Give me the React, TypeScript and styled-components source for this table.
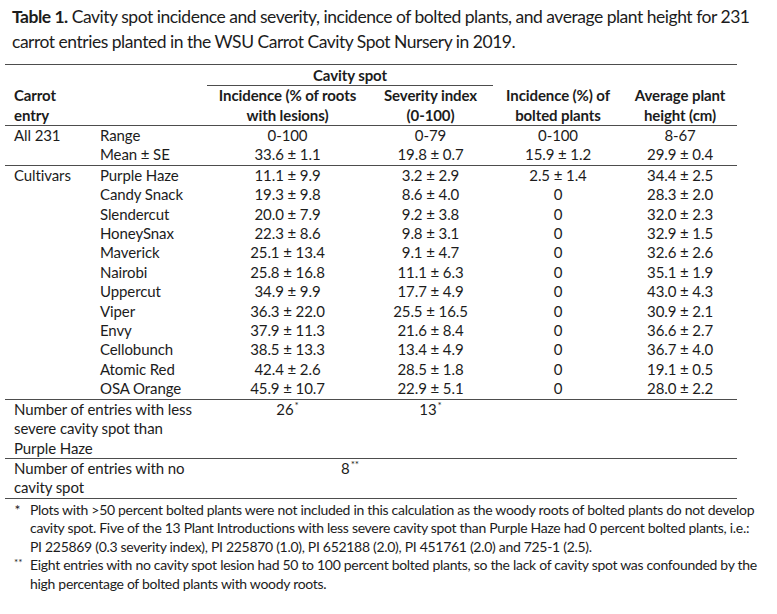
import React from 'react';
import styled, { createGlobalStyle } from 'styled-components';

const GlobalStyle = createGlobalStyle`
  html, body {
    margin: 0;
    padding: 0;
    background: #ffffff;
  }
  body {
    font-family: Lato, "Open Sans", "Liberation Sans", sans-serif;
    color: #1c1c1c;
  }
`;

const Page = styled.div`
  width: 777px;
  height: 614px;
  padding: 4px 0 0 5px;
  box-sizing: border-box;
  overflow: hidden;
`;

const Caption = styled.p`
  margin: 0 0 10px 7px;
  font-size: 17.5px;
  letter-spacing: -0.48px;
  line-height: 25px;
  white-space: nowrap;
`;

const Line = styled.span`
  display: block;
`;

const Table = styled.table`
  width: 732px;
  border-collapse: collapse;
  table-layout: fixed;
  font-size: 15px;
  line-height: 19.4px;
  letter-spacing: -0.1px;
  border-top: 1px solid #4d4d4d;
`;

type RowProps = {
  $rule?: boolean;
};

const Row = styled.tr<RowProps>`
  border-bottom: ${(props) => (props.$rule ? '1px solid #4d4d4d' : 'none')};
`;

type CellProps = {
  $align?: 'left' | 'center';
};

const Th = styled.th<CellProps>`
  font-weight: 700;
  padding: 0 9px;
  vertical-align: bottom;
  text-align: ${(props) => props.$align || 'center'};
  line-height: 19.5px;
`;

const GroupTh = styled.th`
  font-weight: 700;
  padding: 0;
  height: 20px;
  line-height: 20px;
  text-align: center;
  border-bottom: 1px solid #4d4d4d;
`;

const Td = styled.td<CellProps>`
  padding: 0 9px;
  vertical-align: top;
  white-space: nowrap;
  text-align: ${(props) => props.$align || 'center'};
`;

const WrapTd = styled.td`
  padding: 0 9px;
  vertical-align: top;
  text-align: left;
`;

const Mark = styled.sup`
  font-size: 10px;
  line-height: 0;
  vertical-align: 6px;
  margin-left: 1px;
`;

const Notes = styled.div`
  margin-top: 2px;
  font-size: 14px;
  line-height: 18.5px;
`;

const Note = styled.div`
  display: grid;
  grid-template-columns: 25px 1fr;
  white-space: nowrap;
`;

const NoteText = styled.div`
  letter-spacing: -0.3px;
`;

type StarProps = {
  $double?: boolean;
};

const Star = styled.span<StarProps>`
  text-align: ${(props) => (props.$double ? 'left' : 'center')};
  padding-left: ${(props) => (props.$double ? '9px' : '0')};
  font-size: ${(props) => (props.$double ? '10px' : '14px')};
  line-height: ${(props) => (props.$double ? '12px' : '18.5px')};
`;

type Cultivar = [string, string, string, string, string];

const cultivars: Cultivar[] = [
  ['Purple Haze', '11.1 ± 9.9', '3.2 ± 2.9', '2.5 ± 1.4', '34.4 ± 2.5'],
  ['Candy Snack', '19.3 ± 9.8', '8.6 ± 4.0', '0', '28.3 ± 2.0'],
  ['Slendercut', '20.0 ± 7.9', '9.2 ± 3.8', '0', '32.0 ± 2.3'],
  ['HoneySnax', '22.3 ± 8.6', '9.8 ± 3.1', '0', '32.9 ± 1.5'],
  ['Maverick', '25.1 ± 13.4', '9.1 ± 4.7', '0', '32.6 ± 2.6'],
  ['Nairobi', '25.8 ± 16.8', '11.1 ± 6.3', '0', '35.1 ± 1.9'],
  ['Uppercut', '34.9 ± 9.9', '17.7 ± 4.9', '0', '43.0 ± 4.3'],
  ['Viper', '36.3 ± 22.0', '25.5 ± 16.5', '0', '30.9 ± 2.1'],
  ['Envy', '37.9 ± 11.3', '21.6 ± 8.4', '0', '36.6 ± 2.7'],
  ['Cellobunch', '38.5 ± 13.3', '13.4 ± 4.9', '0', '36.7 ± 4.0'],
  ['Atomic Red', '42.4 ± 2.6', '28.5 ± 1.8', '0', '19.1 ± 0.5'],
  ['OSA Orange', '45.9 ± 10.7', '22.9 ± 5.1', '0', '28.0 ± 2.2'],
];

function App() {
  return (
    <>
      <GlobalStyle />
      <Page>
        <Caption>
          <Line>
            <b>Table 1.</b> Cavity spot incidence and severity, incidence of bolted plants, and average plant height for 231
          </Line>
          <Line>carrot entries planted in the WSU Carrot Cavity Spot Nursery in 2019.</Line>
        </Caption>

        <Table>
          <colgroup>
            <col style={{ width: 86 }} />
            <col style={{ width: 116 }} />
            <col style={{ width: 161 }} />
            <col style={{ width: 125 }} />
            <col style={{ width: 130 }} />
            <col style={{ width: 114 }} />
          </colgroup>
          <thead>
            <tr>
              <th aria-hidden />
              <th aria-hidden />
              <GroupTh colSpan={2}>Cavity spot</GroupTh>
              <th aria-hidden />
              <th aria-hidden />
            </tr>
            <Row $rule>
              <Th $align="left">Carrot<br />entry</Th>
              <Th />
              <Th>Incidence (% of roots<br />with lesions)</Th>
              <Th>Severity index<br />(0-100)</Th>
              <Th>Incidence (%) of<br />bolted plants</Th>
              <Th>Average plant<br />height (cm)</Th>
            </Row>
          </thead>
          <tbody>
            <Row>
              <Td $align="left">All 231</Td>
              <Td $align="left">Range</Td>
              <Td>0-100</Td>
              <Td>0-79</Td>
              <Td>0-100</Td>
              <Td>8-67</Td>
            </Row>
            <Row $rule>
              <Td />
              <Td $align="left">Mean ± SE</Td>
              <Td>33.6 ± 1.1</Td>
              <Td>19.8 ± 0.7</Td>
              <Td>15.9 ± 1.2</Td>
              <Td>29.9 ± 0.4</Td>
            </Row>
            {cultivars.map((c, index) => (
              <Row key={c[0]} $rule={index === cultivars.length - 1}>
                <Td $align="left">{index === 0 ? 'Cultivars' : ''}</Td>
                <Td $align="left">{c[0]}</Td>
                <Td>{c[1]}</Td>
                <Td>{c[2]}</Td>
                <Td>{c[3]}</Td>
                <Td>{c[4]}</Td>
              </Row>
            ))}
            <Row $rule>
              <WrapTd colSpan={2}>Number of entries with less severe cavity spot than Purple Haze</WrapTd>
              <Td>26<Mark>*</Mark></Td>
              <Td>13<Mark>*</Mark></Td>
              <Td />
              <Td />
            </Row>
            <Row $rule>
              <WrapTd colSpan={2}>Number of entries with no cavity spot</WrapTd>
              <Td colSpan={2}>8<Mark>**</Mark></Td>
              <Td />
              <Td />
            </Row>
          </tbody>
        </Table>

        <Notes>
          <Note>
            <Star>*</Star>
            <NoteText>
              <Line>Plots with &gt;50 percent bolted plants were not included in this calculation as the woody roots of bolted plants do not develop</Line>
              <Line>cavity spot. Five of the 13 Plant Introductions with less severe cavity spot than Purple Haze had 0 percent bolted plants, i.e.:</Line>
              <Line>PI 225869 (0.3 severity index), PI 225870 (1.0), PI 652188 (2.0), PI 451761 (2.0) and 725-1 (2.5).</Line>
            </NoteText>
          </Note>
          <Note>
            <Star $double>**</Star>
            <NoteText>
              <Line>Eight entries with no cavity spot lesion had 50 to 100 percent bolted plants, so the lack of cavity spot was confounded by the</Line>
              <Line>high percentage of bolted plants with woody roots.</Line>
            </NoteText>
          </Note>
        </Notes>
      </Page>
    </>
  );
}

export default App;
